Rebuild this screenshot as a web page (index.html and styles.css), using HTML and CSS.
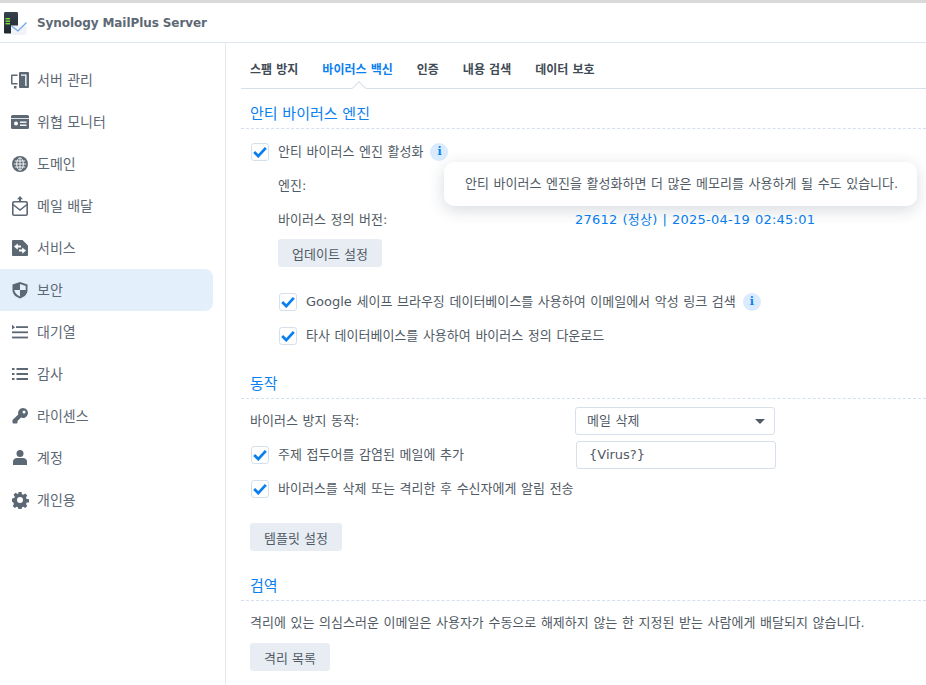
FILE: index.html
```html
<!DOCTYPE html>
<html lang="ko">
<head>
<meta charset="utf-8">
<title>Synology MailPlus Server</title>
<link rel="stylesheet" href="styles.css">
</head>
<body>
<div class="topline"></div>
<header class="header">
  <svg class="logo" viewBox="0 0 23 23" width="23" height="23">
    <defs><linearGradient id="srv" x1="0" y1="0" x2="0" y2="1"><stop offset="0" stop-color="#37424f"/><stop offset="1" stop-color="#1f2731"/></linearGradient></defs>
    <rect x="0" y="0" width="14" height="21.500" rx="1.200" fill="url(#srv)"/>
    <rect x="1.500" y="6" width="4.500" height="1.400" fill="#7fe03c"/><rect x="1.500" y="8.500" width="4.500" height="1.400" fill="#7fe03c"/><rect x="1.500" y="11" width="4.500" height="1.400" fill="#7fe03c"/>
    <path d="M7 13.500 H22.500 V22 a1 1 0 0 1-1 1 H8 a1 1 0 0 1-1-1 Z" fill="#f1f3f6"/>
    <path d="M7.500 14 L14 19 L22.500 10.500" fill="none" stroke="#6fa5ee" stroke-width="1.300"/>
  </svg>
  <span class="app-title">Synology MailPlus Server</span>
</header>
<div class="body">
  <nav class="sidebar">
    <a class="nav-item"><svg class="ico" viewBox="0 0 18 18"><rect x="8" y="1" width="10" height="16" rx="1" fill="#5d6875"/><path d="M10 3.500h5.500V15h-1.300V4.800H10Z" fill="#fff"/><path d="M6.500 3.500H1a1 1 0 0 0-1 1v8a1 1 0 0 0 1 1h5.500v-1.500H1.500V5h5Z" fill="#5d6875"/><rect x="3" y="15" width="2.500" height="2.500" fill="#5d6875"/></svg><span>서버 관리</span></a>
    <a class="nav-item"><svg class="ico" viewBox="0 0 18 18"><rect y="2" width="18" height="14" rx="1.500" fill="#5d6875"/><rect x="0" y="5" width="18" height=".8" fill="#fff"/><circle cx="5" cy="10.500" r="2" fill="#fff"/><rect x="9" y="8.500" width="6.500" height="1.400" fill="#fff"/><rect x="9" y="11.500" width="6.500" height="1.400" fill="#fff"/></svg><span>위협 모니터</span></a>
    <a class="nav-item"><svg class="ico" viewBox="0 0 18 18" fill="none"><circle cx="9" cy="9" r="8" fill="#5d6875"/><g stroke="#fff" stroke-width=".9"><ellipse cx="9" cy="9" rx="3.300" ry="6.200"/><path d="M9 2.800v12.400M2.800 9h12.400M3.800 6h10.400M3.800 12h10.400"/></g></svg><span>도메인</span></a>
    <a class="nav-item"><svg class="ico ico-tall" viewBox="0 0 18 20" fill="none"><path d="M9 0l3 3.200h-2V6H8V3.200H6Z" fill="#5d6875"/><rect x="1.800" y="5.800" width="14.400" height="13.400" rx="1.200" stroke="#5d6875" stroke-width="1.600"/><path d="M2 8.500l7 5.500 7-5.500" stroke="#5d6875" stroke-width="1.500"/></svg><span>메일 배달</span></a>
    <a class="nav-item"><svg class="ico" viewBox="0 0 18 18"><path d="M2 1h9.500L17 6.500V16a1 1 0 0 1-1 1H2a1 1 0 0 1-1-1V2a1 1 0 0 1 1-1Z" fill="#5d6875"/><path d="M3 7.500L6.800 4.500v2h3.200v2H6.800v2.200ZM15 11.500l-3.800-3v2H8v2h3.200v2.200Z" fill="#fff"/></svg><span>서비스</span></a>
    <a class="nav-item active"><svg class="ico" viewBox="0 0 18 18"><path d="M9 1l7.500 2.500V9c0 4-3 6.900-7.500 8.500C4.500 15.900 1.500 13 1.500 9V3.500Z" fill="#5d6875"/><path d="M9 3l5.700 1.900V9H9ZM9 9H3.300c.3 2.900 2.700 5 5.700 6.400Z" fill="#e3f0fc"/></svg><span>보안</span></a>
    <a class="nav-item"><svg class="ico" viewBox="0 0 18 18"><path d="M1 1.800l3 2.400-3 2.400Z" fill="#5d6875"/><rect x="5" y="3.200" width="12" height="1.800" fill="#5d6875"/><rect x="1" y="8.400" width="16" height="1.800" fill="#5d6875"/><rect x="1" y="13.600" width="16" height="1.800" fill="#5d6875"/></svg><span>대기열</span></a>
    <a class="nav-item"><svg class="ico" viewBox="0 0 18 18"><g fill="#5d6875"><rect x="1" y="3" width="2.500" height="2"/><rect x="1" y="8" width="2.500" height="2"/><rect x="1" y="13" width="2.500" height="2"/><rect x="5.500" y="3" width="11.500" height="2"/><rect x="5.500" y="8" width="11.500" height="2"/><rect x="5.500" y="13" width="11.500" height="2"/></g></svg><span>감사</span></a>
    <a class="nav-item"><svg class="ico" viewBox="0 0 18 18"><path d="M12 1a5 5 0 1 1-2 9.600L6.500 14v1.500a1 1 0 0 1-1 1H2.500a1 1 0 0 1-1-1V13L7.300 7.400A5 5 0 0 1 12 1Z" fill="#5d6875"/><circle cx="13" cy="5" r="1.500" fill="#fff"/></svg><span>라이센스</span></a>
    <a class="nav-item"><svg class="ico" viewBox="0 0 18 18"><circle cx="9" cy="4.500" r="3.500" fill="#5d6875"/><path d="M2 16v-3.500C2 10.500 4 9 6 9h6c2 0 4 1.500 4 3.500V16Z" fill="#5d6875"/></svg><span>계정</span></a>
    <a class="nav-item"><svg class="ico" viewBox="0 0 18 18"><path fill-rule="evenodd" d="M7.500 1h3l.4 2.200 1.400.6 1.900-1.300 2.100 2.100-1.300 1.900.6 1.400 2.400.4v3l-2.400.4-.6 1.400 1.300 1.900-2.100 2.100-1.900-1.300-1.400.6-.4 2.400h-3l-.4-2.400-1.400-.6-1.900 1.300-2.100-2.100 1.300-1.900-.6-1.400L1 10.500v-3l2.200-.4.600-1.400-1.300-1.900 2.100-2.100 1.900 1.300 1-.4ZM9 6a3 3 0 1 0 0 6 3 3 0 0 0 0-6Z" fill="#5d6875"/></svg><span>개인용</span></a>
  </nav>
  <main class="main">
    <div class="tabs">
      <span class="tab">스팸 방지</span>
      <span class="tab tab-active">바이러스 백신</span>
      <span class="tab">인증</span>
      <span class="tab">내용 검색</span>
      <span class="tab">데이터 보호</span>
    </div>
    <h2 class="section-title first">안티 바이러스 엔진</h2>
    <div class="row check-row">
      <span class="check"><svg viewBox="0 0 12 10"><path d="M1 5l3.500 3.500L11 1.500" fill="none" stroke="#0a7ff0" stroke-width="2.400"/></svg></span>
      <span>안티 바이러스 엔진 활성화</span>
      <span class="info">i</span>
    </div>
    <div class="row indent"><span>엔진:</span></div>
    <div class="row indent"><span class="col-label">바이러스 정의 버전:</span><span class="blue">27612 (정상) | 2025-04-19 02:45:01</span></div>
    <div class="btn-row indent-btn"><button class="btn">업데이트 설정</button></div>
    <div class="row check-row sub">
      <span class="check"><svg viewBox="0 0 12 10"><path d="M1 5l3.500 3.500L11 1.500" fill="none" stroke="#0a7ff0" stroke-width="2.400"/></svg></span>
      <span>Google 세이프 브라우징 데이터베이스를 사용하여 이메일에서 악성 링크 검색</span>
      <span class="info">i</span>
    </div>
    <div class="row check-row sub">
      <span class="check"><svg viewBox="0 0 12 10"><path d="M1 5l3.500 3.500L11 1.500" fill="none" stroke="#0a7ff0" stroke-width="2.400"/></svg></span>
      <span>타사 데이터베이스를 사용하여 바이러스 정의 다운로드</span>
    </div>
    <h2 class="section-title action">동작</h2>
    <div class="row form-row"><span class="form-label">바이러스 방지 동작:</span><span class="select">메일 삭제<i class="caret"></i></span></div>
    <div class="row form-row check-row">
      <span class="check"><svg viewBox="0 0 12 10"><path d="M1 5l3.500 3.500L11 1.500" fill="none" stroke="#0a7ff0" stroke-width="2.400"/></svg></span>
      <span class="form-label-check">주제 접두어를 감염된 메일에 추가</span><span class="input">{Virus?}</span>
    </div>
    <div class="row check-row">
      <span class="check"><svg viewBox="0 0 12 10"><path d="M1 5l3.500 3.500L11 1.500" fill="none" stroke="#0a7ff0" stroke-width="2.400"/></svg></span>
      <span>바이러스를 삭제 또는 격리한 후 수신자에게 알림 전송</span>
    </div>
    <div class="btn-row tpl"><button class="btn">템플릿 설정</button></div>
    <h2 class="section-title quarantine">검역</h2>
    <p class="desc">격리에 있는 의심스러운 이메일은 사용자가 수동으로 해제하지 않는 한 지정된 받는 사람에게 배달되지 않습니다.</p>
    <div class="btn-row"><button class="btn">격리 목록</button></div>
    <div class="tooltip">안티 바이러스 엔진을 활성화하면 더 많은 메모리를 사용하게 될 수도 있습니다.</div>
  </main>
</div>
</body>
</html>
```
FILE: styles.css
```css
* { box-sizing: border-box; }
html, body { margin: 0; height: 100%; overflow: hidden; }
body { width: 926px; height: 685px; background: #fff; color: #505a64; font: 13px/20px "DejaVu Sans", "Noto Sans CJK KR", sans-serif; word-spacing: .5px; }
.topline { height: 3px; background: #d9d9d9; }
.header { height: 40px; border-bottom: 1px solid #dde5ee; display: flex; align-items: center; padding-left: 4px; gap: 10px; }
.logo { flex: none; margin-top: 7px; margin-bottom: 6px; }
.app-title { font-weight: 700; font-size: 12px; color: #5d6875; word-spacing: 0; letter-spacing: -.08px; }
.body { display: flex; height: 642px; }
.sidebar { width: 226px; flex: none; border-right: 1px solid #e3e9f0; padding: 16px 12px 0 0; }
.nav-item { display: flex; align-items: center; height: 42px; padding-left: 11px; gap: 8px; color: #5d6875; font-size: 14px; word-spacing: 0; }
.nav-item.active { background: #e3f0fc; border-radius: 0 8px 8px 0; }
.ico { width: 18px; height: 18px; flex: none; }
.ico-tall { height: 20px; }
.main { position: relative; flex: 1; padding-left: 15px; min-width: 0; }
.tabs { height: 46px; display: flex; align-items: center; border-bottom: 1px solid #d6e0eb; padding: 8px 0 0 9px; gap: 24px; font-weight: 700; font-size: 12px; position: relative; word-spacing: 0; }
.tab { color: #414b55; font-weight: 700; }
.tab-active { color: #0a7ff0; position: relative; align-self: stretch; display: flex; align-items: center; }
.tab-active::after { content: ""; position: absolute; left: 50%; bottom: -5px; width: 9px; height: 9px; margin-left: -4px; background: #fff; border-left: 1px solid #d6e0eb; border-top: 1px solid #d6e0eb; transform: rotate(45deg); }
.section-title { margin: 0; height: 40px; padding: 14px 0 0 9px; font-size: 15px; line-height: 22px; font-weight: 400; color: #0a7ff0; border-bottom: 1px dashed #d6e0eb; word-spacing: 0; }
.section-title.first { margin-bottom: 6px; }
.section-title.action { height: 46px; padding-top: 20px; margin-bottom: 5px; }
.section-title.quarantine { height: 50px; padding-top: 24px; }
.row { display: flex; align-items: center; height: 34px; padding-left: 9px; }
.check-row { gap: 9px; padding-left: 10px; }
.check { width: 18px; height: 18px; flex: none; border: 1px solid #d6e0eb; border-radius: 3px; display: flex; align-items: center; justify-content: center; background: #fff; }
.check svg { width: 14px; height: 12px; }
.info { width: 18px; height: 18px; border-radius: 50%; background: #d9ebfd; color: #0a7ff0; font: 700 11px/18px "DejaVu Serif", serif; text-align: center; margin-left: -2px; }
.indent { padding-left: 37px; }
.col-label { width: 297px; }
.blue { color: #0a7ff0; letter-spacing: .25px; }
.btn-row { padding-left: 9px; }
.indent-btn { padding: 2px 0 18px 37px; }
.btn { height: 28px; border: 0; border-radius: 3px; background: #e8edf4; color: #505a64; font: 13px "DejaVu Sans", "Noto Sans CJK KR", sans-serif; padding: 0 14px; display: block; }
.sub { padding-left: 38px; }
.form-label { width: 325px; }
.form-label-check { width: 289px; }
.select { width: 200px; height: 28px; border: 1px solid #d6e0eb; border-radius: 3px; padding: 0 9px 0 11px; display: flex; align-items: center; justify-content: space-between; }
.caret { width: 0; height: 0; border: 5px solid transparent; border-top: 5px solid #505a64; border-bottom: 0; }
.input { width: 200px; height: 28px; border: 1px solid #d6e0eb; border-radius: 3px; padding: 0 12px; display: flex; align-items: center; }
.tpl { padding-top: 17px; }
.desc { margin: 12px 0 10px; padding-left: 9px; white-space: nowrap; font-size: 13px; }
.tooltip { position: absolute; left: 218px; top: 119px; width: 473px; height: 44px; background: #fff; border-radius: 10px; box-shadow: 0 4px 16px rgba(30,50,80,.18); display: flex; align-items: center; padding-left: 21px; font-size: 13px; white-space: nowrap; word-spacing: .5px; }
```
